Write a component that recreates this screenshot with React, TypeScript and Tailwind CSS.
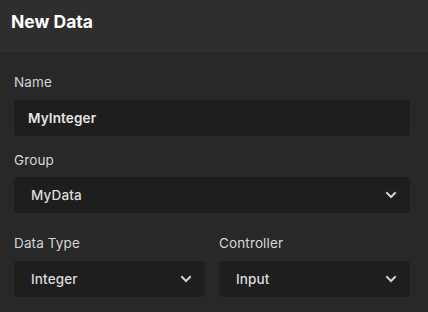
import React from "react";

function Chevron() {
  return (
    <svg width="12" height="8" viewBox="0 0 12 8" fill="none" className="shrink-0">
      <path d="M2 2 L6 6 L10 2" stroke="#d0d0d0" strokeWidth="2" strokeLinecap="square" />
    </svg>
  );
}

function Select({ value }: { value: string }) {
  return (
    <div className="h-9 rounded-[4px] bg-[#1e1e1e] flex items-center justify-between pl-[17px] pr-[13px]">
      <span className="text-[13.5px] tracking-[0.01em] font-medium text-[#dcdcdc]">{value}</span>
      <Chevron />
    </div>
  );
}

export default function App() {
  return (
    <div
      className="w-[428px] h-[312px] bg-[#282828] overflow-hidden"
      style={{ fontFamily: "Inter, 'Noto Sans', sans-serif" }}
    >
      <div className="h-[52px] bg-[#2e2e2e] px-[11px] pt-[10px]">
        <h1 className="text-[17.5px] leading-[24px] font-bold text-white">New Data</h1>
      </div>
      <div className="pl-[14px] pr-[18px] pt-[21px]">
        <div className="text-[13.5px] tracking-[0.01em] leading-[18px] text-[#d6d6d6]">Name</div>
        <div className="mt-[9px] h-9 rounded-[4px] bg-[#1e1e1e] flex items-center px-[14px]">
          <span className="text-[13.5px] tracking-[0.01em] font-semibold text-[#e6e6e6]">MyInteger</span>
        </div>
        <div className="mt-[15px] text-[13.5px] tracking-[0.01em] leading-[18px] text-[#d6d6d6]">Group</div>
        <div className="mt-[8px]">
          <Select value="MyData" />
        </div>
        <div className="mt-[21px] grid grid-cols-2 gap-[14px]">
          <div>
            <div className="text-[13.5px] tracking-[0.01em] leading-[18px] text-[#d6d6d6]">Data Type</div>
            <div className="mt-[9px]">
              <Select value="Integer" />
            </div>
          </div>
          <div>
            <div className="text-[13.5px] tracking-[0.01em] leading-[18px] text-[#d6d6d6]">Controller</div>
            <div className="mt-[9px]">
              <Select value="Input" />
            </div>
          </div>
        </div>
      </div>
    </div>
  );
}
